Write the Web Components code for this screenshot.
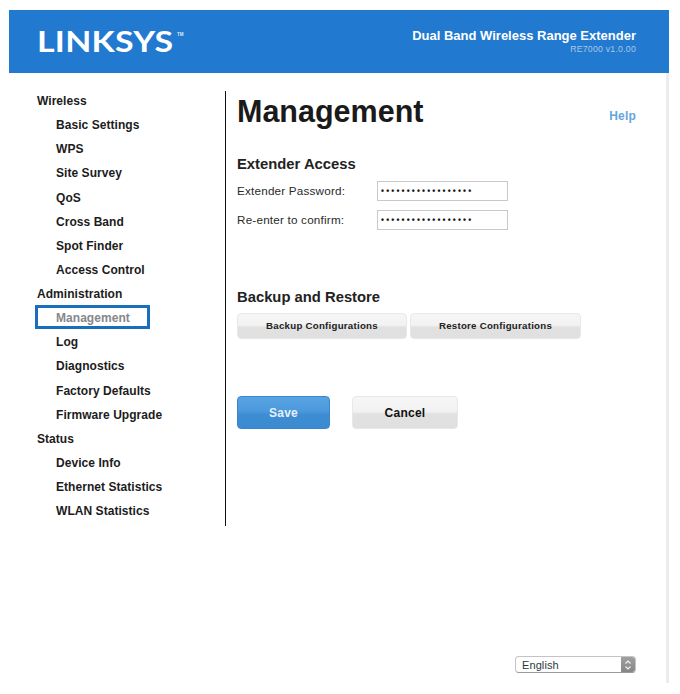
<!DOCTYPE html>
<html lang="en"><head><meta charset="utf-8"><title>Management</title>
<style>
html,body{margin:0;padding:0;background:#fff}
body{font-family:"Liberation Sans",Arial,sans-serif;width:680px;height:694px;overflow:hidden}
</style></head><body>
<ls-page>
<ls-header slot="header"></ls-header>
<ls-nav slot="nav">
<ls-navitem kind="head">Wireless</ls-navitem>
<ls-navitem>Basic Settings</ls-navitem>
<ls-navitem>WPS</ls-navitem>
<ls-navitem>Site Survey</ls-navitem>
<ls-navitem>QoS</ls-navitem>
<ls-navitem>Cross Band</ls-navitem>
<ls-navitem>Spot Finder</ls-navitem>
<ls-navitem>Access Control</ls-navitem>
<ls-navitem kind="head">Administration</ls-navitem>
<ls-navitem kind="active">Management</ls-navitem>
<ls-navitem>Log</ls-navitem>
<ls-navitem>Diagnostics</ls-navitem>
<ls-navitem>Factory Defaults</ls-navitem>
<ls-navitem>Firmware Upgrade</ls-navitem>
<ls-navitem kind="head">Status</ls-navitem>
<ls-navitem>Device Info</ls-navitem>
<ls-navitem>Ethernet Statistics</ls-navitem>
<ls-navitem>WLAN Statistics</ls-navitem>
</ls-nav>
<ls-main slot="main"></ls-main>
<ls-lang slot="footer"></ls-lang>
</ls-page>
<script>
function def(name,css,html,init){
  customElements.define(name,class extends HTMLElement{
    constructor(){super();const r=this.attachShadow({mode:'open'});r.innerHTML='<style>'+css+'</style>'+html;}
    connectedCallback(){if(init)init.call(this,this.shadowRoot);}
  });
}
def('ls-page',`
:host{display:block;position:relative;width:680px;height:694px}
.strip{box-sizing:border-box;width:660px;margin:10px 0 0 9px;height:673px;border-right:3px solid #ececec;display:flex;flex-direction:column}
.body{display:flex;flex:1;min-height:0}
.foot{display:flex;justify-content:flex-end;padding:0 30px 10px 0}
`,`<div class="strip"><slot name="header"></slot>
<div class="body"><slot name="nav"></slot><slot name="main"></slot></div>
<div class="foot"><slot name="footer"></slot></div></div>`);

def('ls-header',`
:host{display:flex;justify-content:space-between;box-sizing:border-box;height:63px;width:660px;flex:none;background:#2179d0;color:#fff;padding:0 33px 0 28px}
.logo{display:flex;align-items:flex-start;padding-top:16px}
.logo b{font:700 28px/30px Lato,"Liberation Sans",sans-serif;letter-spacing:.2px;transform:scaleX(1.21);transform-origin:0 0;display:block;width:139px;white-space:nowrap}
.tm{font:700 4.5px/5px "Liberation Sans",sans-serif;margin:6px 0 0 1px;color:#dfe9f5}
.r{text-align:right;padding-top:18px}
.t{font:700 13px/15px "Liberation Sans",sans-serif;white-space:nowrap}
.v{font:400 8.7px/10px "Liberation Sans",sans-serif;color:#a9c8e8;margin-top:1px;letter-spacing:.25px}
`,`<div class="logo"><b>LINKSYS</b><span class="tm">TM</span></div>
<div class="r"><div class="t">Dual Band Wireless Range Extender</div><div class="v">RE7000 v1.0.00</div></div>`);

def('ls-nav',`
:host{display:block;box-sizing:border-box;width:217px;height:435px;margin-top:18px;padding-left:28px;border-right:1px solid #111;flex:none}
.list{margin-top:-2px}
`,`<div class="list"><slot></slot></div>`);

def('ls-navitem',`
:host{display:block;font:700 12px/24.13px "Liberation Sans",sans-serif;color:#1c1c1c;padding-left:19px;height:24.13px;white-space:nowrap;letter-spacing:.05px;position:relative}
:host([kind=head]){padding-left:0}
:host([kind=active]){color:#85878b}
.box{display:none;position:absolute;left:-2px;top:-1px;width:115px;height:24px;box-sizing:border-box;border:3px solid #1a6fbd}
:host([kind=active]) .box{display:block}
`,`<span class="box"></span><slot></slot>`);

def('ls-button',`
:host{display:inline-flex;align-items:center;justify-content:center;box-sizing:border-box;border-radius:4px;font:700 9.7px/1 "Liberation Sans",sans-serif;color:#222;letter-spacing:.25px;height:26px;border:1px solid #e8e8e8;background:linear-gradient(#f6f6f6 0,#f2f2f2 46%,#e1e1e1 56%,#e0e0e0 100%);white-space:nowrap}
:host([variant=blue]){background:linear-gradient(#58a3e2,#4b99dc 46%,#3e8cd2 56%,#3c8ad0);border-color:#3a86cc;color:#e6f0fa;font-size:12px;height:33px}
:host([variant=cancel]){font-size:12px;height:33px;color:#111}
`,`<slot></slot>`);

def('ls-field',`
:host{display:flex;align-items:center;height:20px;font:400 11.7px/20px "Liberation Sans",sans-serif;color:#2a2a2a;letter-spacing:.2px}
label{width:140px;flex:none}
.in{box-sizing:border-box;width:131px;height:20px;border:1px solid #c9c9c9;background:#fff;padding-left:3px;display:flex;align-items:center;font:700 8.5px/1 "Liberation Sans",sans-serif;letter-spacing:2.15px;color:#111;overflow:hidden;white-space:nowrap}
`,`<label><slot></slot></label><div class="in">••••••••••••••••••</div>`);

def('ls-main',`
:host{display:block;flex:1;padding:0 30px 0 11px;box-sizing:border-box;min-width:0}
.top{display:flex;justify-content:space-between;align-items:baseline;padding-top:21px;height:34px;box-sizing:content-box}
h1{margin:0;font:700 30.5px/34px "Liberation Sans",sans-serif;color:#1a1a1a;letter-spacing:0}
.help{font:700 12px/14px "Liberation Sans",sans-serif;color:#64a6de;letter-spacing:.2px;position:relative;top:-2px}
h2{margin:0;font:700 14.8px/18px "Liberation Sans",sans-serif;color:#222}
.a{margin-top:27px}
.f{display:flex;flex-direction:column;gap:9px;margin-top:8px}
.b{margin-top:58px}
.row{display:flex;gap:3px;margin-top:7px}
.act{display:flex;gap:22px;margin-top:57px}
`,`<div class="top"><h1>Management</h1><span class="help">Help</span></div>
<div class="a"><h2>Extender Access</h2><div class="f"><ls-field>Extender Password:</ls-field><ls-field>Re-enter to confirm:</ls-field></div></div>
<div class="b"><h2>Backup and Restore</h2><div class="row"><ls-button style="width:170px">Backup Configurations</ls-button><ls-button style="width:171px">Restore Configurations</ls-button></div></div>
<div class="act"><ls-button variant="blue" style="width:93px">Save</ls-button><ls-button variant="cancel" style="width:106px">Cancel</ls-button></div>`);

def('ls-lang',`
:host{display:flex;box-sizing:border-box;width:121px;height:17px;border-radius:4px;border:1px solid #c4c4c4;border-bottom-color:#9a9a9a;font:400 11px/16px "Liberation Sans",sans-serif;color:#2a3a3a;background:#fff;overflow:hidden;letter-spacing:.1px}
span{flex:1;padding-left:6px}
i{width:14px;background:linear-gradient(#a0a0a0,#868686);display:flex;align-items:center;justify-content:center}
`,`<span>English</span><i><svg width="8" height="12" viewBox="0 0 8 12" fill="none" stroke="#f2f2f2" stroke-width="1.2"><path d="M1.5 4.5 4 2l2.5 2.5M1.5 7.5 4 10l2.5-2.5"/></svg></i>`);
</script>
</body></html>
